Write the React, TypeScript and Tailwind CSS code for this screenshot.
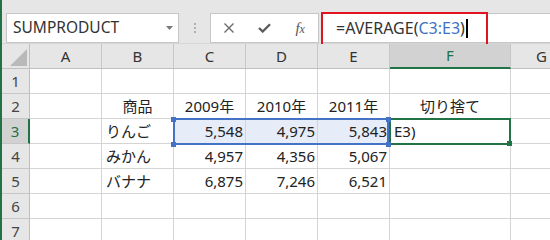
import React from "react";

type Align = "l" | "c" | "r";
type CellDef = { t?: string; a?: Align; sel?: boolean; active?: boolean };

const colW = [
  "w-[72px]",
  "w-[72px]",
  "w-[72px]",
  "w-[72px]",
  "w-[72px]",
  "w-[121px]",
  "w-[62px]",
];
const colNames = ["A", "B", "C", "D", "E", "F", "G"];

const rows: CellDef[][] = [
  [{}, {}, {}, {}, {}, {}, {}],
  [
    {},
    { t: "商品", a: "c" },
    { t: "2009年", a: "c" },
    { t: "2010年", a: "c" },
    { t: "2011年", a: "c" },
    { t: "切り捨て", a: "c" },
    {},
  ],
  [
    {},
    { t: "りんご", a: "l" },
    { t: "5,548", a: "r", sel: true },
    { t: "4,975", a: "r", sel: true },
    { t: "5,843", a: "r", sel: true },
    { t: "E3)", a: "l", active: true },
    {},
  ],
  [
    {},
    { t: "みかん", a: "l" },
    { t: "4,957", a: "r" },
    { t: "4,356", a: "r" },
    { t: "5,067", a: "r" },
    {},
    {},
  ],
  [
    {},
    { t: "バナナ", a: "l" },
    { t: "6,875", a: "r" },
    { t: "7,246", a: "r" },
    { t: "6,521", a: "r" },
    {},
    {},
  ],
  [{}, {}, {}, {}, {}, {}, {}],
  [{}, {}, {}, {}, {}, {}, {}],
];

function alignClass(a?: Align) {
  if (a === "c") return "justify-center";
  if (a === "r") return "justify-end pr-[2px]";
  return "justify-start pl-[4px]";
}

export default function App() {
  return (
    <div
      className="w-[550px] h-[240px] overflow-hidden bg-white flex relative"
      style={{ fontFamily: '"Noto Sans", "Noto Sans CJK JP", sans-serif' }}
    >
      <div className="w-[2px] h-full bg-[#217346] shrink-0" />
      <div className="flex flex-col shrink-0 w-[600px]">
        {/* Top bar */}
        <div className="h-[53px] bg-[#e6e6e6] border-b border-[#d6d6d6] flex items-start pt-[13px]">
          <div className="ml-[4px] w-[173px] h-[30px] bg-white border border-[#c6c6c6] flex items-center pl-[6px] pr-[5px] text-[15.5px] text-[#333] shrink-0">
            <span className="flex-1 leading-none">SUMPRODUCT</span>
            <svg width="7" height="4" viewBox="0 0 7 4">
              <path d="M0 0 L7 0 L3.5 4 Z" fill="#7a7a7a" />
            </svg>
          </div>
          <div className="ml-[15px] w-[2px] h-[30px] flex flex-col items-center justify-center gap-[2px] shrink-0">
            <div className="w-[2px] h-[2px] bg-[#b0b0b0]" />
            <div className="w-[2px] h-[2px] bg-[#b0b0b0]" />
            <div className="w-[2px] h-[2px] bg-[#b0b0b0]" />
          </div>
          <div className="ml-[14px] w-[109px] h-[30px] bg-white border border-[#c6c6c6] flex items-center shrink-0">
            <div className="w-[36px] h-full flex items-center justify-center">
              <svg width="10" height="10" viewBox="0 0 10 10">
                <path d="M0.5 0.5 L9.5 9.5 M9.5 0.5 L0.5 9.5" stroke="#6a6a6a" strokeWidth="1.4" />
              </svg>
            </div>
            <div className="w-[36px] h-full flex items-center justify-center">
              <svg width="13" height="10" viewBox="0 0 13 10">
                <path d="M1 5 L4.7 8.5 L12 1.2" stroke="#5a5a5a" strokeWidth="2.3" fill="none" />
              </svg>
            </div>
            <div className="w-[36px] h-full flex items-center justify-center">
              <span
                className="italic text-[15px] text-[#555] leading-none"
                style={{ fontFamily: '"Liberation Serif", serif' }}
              >
                f<span className="text-[12px]">x</span>
              </span>
            </div>
          </div>
          <div className="ml-[2px] w-[260px] h-[30px] bg-white border border-[#c6c6c6] relative flex items-center pl-[14px] shrink-0 text-[16px] text-[#333]">
            <span className="leading-none whitespace-pre">
              =AVERAGE(<span className="text-[#3f72c4]">C3:E3</span>)
            </span>
            <div className="ml-[1px] w-[2px] h-[19px] bg-black" />
            <div className="absolute left-[-1px] top-[-2px] w-[167px] h-[34px] border-2 border-[#e0141e]" />
          </div>
        </div>

        {/* Grid */}
        <div className="relative flex flex-col text-[15px] text-[#222]">
          {/* header row */}
          <div className="flex h-[25px]">
            <div className="w-[28px] h-[25px] bg-[#e6e6e6] border-r border-b border-[#c0c0c0] flex items-end justify-end pr-[2px] pb-[2px] shrink-0">
              <svg width="17" height="17" viewBox="0 0 17 17">
                <path d="M17 0 L17 17 L0 17 Z" fill="#b9b9b9" />
              </svg>
            </div>
            {colNames.map((n, i) => (
              <div
                key={n}
                className={
                  colW[i] +
                  " h-[25px] shrink-0 flex items-center justify-center border-r border-[#c6c6c6] " +
                  (n === "F"
                    ? "bg-[#d2d2d2] border-b-2 border-b-[#217346] text-[#217346]"
                    : "bg-[#e6e6e6] border-b border-b-[#bfbfbf] text-[#333]")
                }
              >
                {n}
              </div>
            ))}
          </div>
          {rows.map((r, ri) => (
            <div key={ri} className="flex h-[25px]">
              <div
                className={
                  "w-[28px] h-[25px] shrink-0 flex items-center justify-center border-b border-[#c6c6c6] " +
                  (ri === 2
                    ? "bg-[#d2d2d2] border-r-2 border-r-[#217346] text-[#217346]"
                    : "bg-[#e6e6e6] border-r border-r-[#bfbfbf] text-[#444]")
                }
              >
                {ri + 1}
              </div>
              {r.map((c, ci) => (
                <div
                  key={ci}
                  className={
                    colW[ci] +
                    " h-[25px] shrink-0 flex items-center whitespace-nowrap overflow-hidden border-r border-b border-[#d4d4d4] " +
                    alignClass(c.a) +
                    (c.sel ? " bg-[#e6edf8]" : "") +
                    (c.active ? " pl-[3px]" : "")
                  }
                >
                  {c.t}
                </div>
              ))}
            </div>
          ))}

          {/* active cell */}
          <div className="absolute left-[387px] top-[74px] w-[122px] h-[27px] border-2 border-[#217346]" />
          <div className="absolute left-[505px] top-[97px] w-[5px] h-[5px] bg-[#217346]" />
          {/* selection range */}
          <div className="absolute left-[171px] top-[74px] w-[216px] h-[27px] border-2 border-[#4472c4]" />
          <div className="absolute left-[169px] top-[73px] w-[5px] h-[5px] bg-[#4472c4]" />
          <div className="absolute left-[169px] top-[98px] w-[5px] h-[5px] bg-[#4472c4]" />
          <div className="absolute left-[384px] top-[73px] w-[5px] h-[5px] bg-[#4472c4]" />
          <div className="absolute left-[384px] top-[98px] w-[5px] h-[5px] bg-[#4472c4]" />
        </div>
      </div>
    </div>
  );
}
